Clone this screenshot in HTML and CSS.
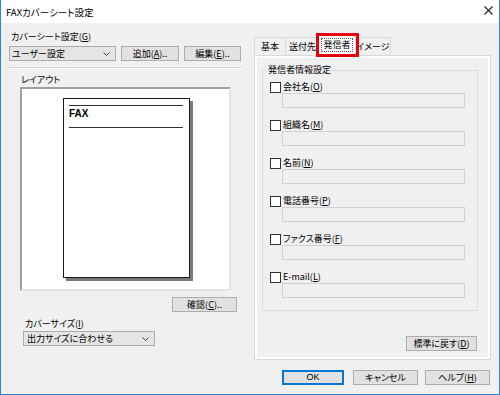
FILE: index.html
```html
<!DOCTYPE html>
<html lang="ja">
<head>
<meta charset="utf-8">
<title>FAXカバーシート設定</title>
<link rel="stylesheet" href="styles.css">
</head>
<body>
<div class="window">
  <div class="titlebar">
    <span class="title">FAXカバーシート設定</span>
    <svg class="close" width="9" height="9" viewBox="0 0 9 9"><path d="M0.5 0.5 L8.5 8.5 M8.5 0.5 L0.5 8.5" stroke="#222" stroke-width="1.1" fill="none"/></svg>
  </div>
  <div class="main">
    <div class="left">
      <div class="label lbl-cover">カバーシート設定(<u>G</u>)</div>
      <div class="row-top">
        <div class="combo combo-user"><span>ユーザー設定</span><svg class="chev" width="7" height="4" viewBox="0 0 7 4"><path d="M0.5 0.5 L3.5 3.5 L6.5 0.5" stroke="#444" fill="none"/></svg></div>
        <div class="btn btn-add">追加(<u>A</u>)..</div>
        <div class="btn btn-edit">編集(<u>E</u>)..</div>
      </div>
      <div class="sep"></div>
      <div class="label lbl-layout">レイアウト</div>
      <div class="preview">
        <div class="sheet">
          <div class="pline"></div>
          <div class="fax">FAX</div>
          <div class="pline"></div>
        </div>
      </div>
      <div class="btn btn-confirm">確認(<u>C</u>)..</div>
      <div class="label lbl-size">カバーサイズ(<u>I</u>)</div>
      <div class="combo combo-size"><span>出力サイズに合わせる</span><svg class="chev" width="7" height="4" viewBox="0 0 7 4"><path d="M0.5 0.5 L3.5 3.5 L6.5 0.5" stroke="#444" fill="none"/></svg></div>
    </div>
    <div class="right">
      <div class="tabs">
        <div class="tab t1">基本</div>
        <div class="tab t2">送付先</div>
        <div class="tab t3 sel"><span class="focus">発信者</span></div>
        <div class="tab t4">イメージ</div>
      </div>
      <div class="panel">
        <div class="panel-inner">
          <fieldset class="group">
            <legend>発信者情報設定</legend>
            <div class="field"><div class="chk"><span class="box"></span>会社名(<u>O</u>)</div><div class="edit"></div></div>
            <div class="field"><div class="chk"><span class="box"></span>組織名(<u>M</u>)</div><div class="edit"></div></div>
            <div class="field"><div class="chk"><span class="box"></span>名前(<u>N</u>)</div><div class="edit"></div></div>
            <div class="field"><div class="chk"><span class="box"></span>電話番号(<u>P</u>)</div><div class="edit"></div></div>
            <div class="field"><div class="chk"><span class="box"></span>ファクス番号(<u>F</u>)</div><div class="edit"></div></div>
            <div class="field last"><div class="chk"><span class="box"></span>E-mail(<u>L</u>)</div><div class="edit"></div></div>
          </fieldset>
          <div class="btn btn-reset">標準に戻す(<u>D</u>)</div>
        </div>
      </div>
    </div>
  </div>
  <div class="footer">
    <div class="btn btn-ok">OK</div>
    <div class="btn btn-cancel">キャンセル</div>
    <div class="btn btn-help">ヘルプ(<u>H</u>)</div>
  </div>
</div>
</body>
</html>
```

FILE: styles.css
```css
html, body {
  margin: 0;
  padding: 0;
}
body {
  width: 500px;
  height: 395px;
  font-family: "Noto Sans CJK JP", "Noto Sans", sans-serif;
  font-size: 9px;
  color: #000;
  font-feature-settings: "palt";
  overflow: hidden;
}
u {
  text-decoration: underline;
  text-underline-offset: 1px;
}
.window {
  box-sizing: border-box;
  width: 500px;
  height: 395px;
  border: 1px solid #2a86d8;
  border-top: none;
  background: #f0f0f0;
  display: flex;
  flex-direction: column;
}
.titlebar {
  height: 23px;
  background: #fff;
  display: flex;
  align-items: center;
  justify-content: space-between;
  padding: 0 6px 0 5px;
}
.title {
  font-size: 9.5px;
  line-height: 12px;
}
.close {
  display: block;
  margin-top: -2px;
}
.main {
  display: flex;
  padding: 7px 7px 0 7px;
  gap: 12px;
}
.left {
  width: 234px;
  display: flex;
  flex-direction: column;
}
.label {
  height: 14px;
  line-height: 14px;
}
.lbl-cover {
  margin-left: 3px;
}
.row-top {
  display: flex;
  margin-top: 2px;
  margin-left: 1px;
}
.combo {
  box-sizing: border-box;
  height: 15px;
  background: #e5e5e5;
  border: 1px solid #acacac;
  display: flex;
  align-items: center;
  justify-content: space-between;
  padding: 0 5px 0 2px;
  line-height: 13px;
}
.combo-user {
  width: 107px;
}
.btn {
  box-sizing: border-box;
  height: 15px;
  background: #e1e1e1;
  border: 1px solid #adadad;
  display: flex;
  align-items: center;
  justify-content: center;
  line-height: 13px;
  white-space: nowrap;
}
.btn-add {
  width: 58px;
  margin-left: 5px;
}
.btn-edit {
  width: 57px;
  margin-left: 5px;
}
.sep {
  margin-top: 6px;
  border-top: 1px solid #d5d5d5;
  border-bottom: 1px solid #ffffff;
  height: 0;
  width: 234px;
}
.lbl-layout {
  margin-top: 4px;
  margin-left: 13px;
}
.preview {
  box-sizing: border-box;
  width: 211px;
  height: 204px;
  margin-left: 12px;
  background: #fff;
  border-top: 2px solid #a0a0a0;
  border-left: 2px solid #a0a0a0;
  border-right: 2px solid #e3e3e3;
  border-bottom: 2px solid #e3e3e3;
  padding: 9px 0 0 41px;
}
.sheet {
  box-sizing: border-box;
  width: 127px;
  height: 180px;
  border: 1px solid #1a1a1a;
  box-shadow: 3px 3px 0 #7a7a7a;
  padding: 6px 6px 0 5px;
  background: #fff;
}
.pline {
  height: 1px;
  background: #333;
}
.fax {
  font-family: "Liberation Sans", Arial, sans-serif;
  font-weight: bold;
  font-size: 10px;
  line-height: 12px;
  height: 21px;
  padding-top: 2px;
  box-sizing: border-box;
}
.btn-confirm {
  width: 65px;
  margin-top: 6px;
  margin-left: 164px;
}
.lbl-size {
  margin-top: 5px;
  margin-left: 17px;
}
.combo-size {
  width: 132px;
  margin-left: 15px;
  padding-left: 3px;
}
.right {
  width: 237px;
  margin-top: 5px;
  display: flex;
  flex-direction: column;
}
.tabs {
  height: 20px;
  display: flex;
  align-items: flex-end;
}
.tab {
  box-sizing: border-box;
  height: 18px;
  border: 1px solid #d9d9d9;
  border-bottom: none;
  background: #f0f0f0;
  display: flex;
  align-items: center;
  justify-content: center;
  line-height: 14px;
  font-size: 9px;
  white-space: nowrap;
  padding: 0;
}
.t1 { width: 32px; }
.t2 { width: 35px; margin-left: -1px; }
.t3 { width: 38px; }
.t4 { width: 36px; }
.tab.sel {
  height: 20px;
  margin: 0 -1px 0 -2px;
  background: #fff;
  position: relative;
  z-index: 1;
  padding-bottom: 2px;
}
.focus {
  outline: 1px dotted #555;
  outline-offset: 0;
  padding: 0 1px;
  line-height: 12px;
}
.tab.sel::after {
  content: "";
  position: absolute;
  left: -3px;
  right: -4px;
  top: -3px;
  bottom: -2px;
  border: 3px solid #e6000f;
}
.panel {
  box-sizing: border-box;
  height: 305px;
  border: 1px solid #d9d9d9;
  background: #fff;
  padding: 2px;
}
.panel-inner {
  height: 100%;
  box-sizing: border-box;
  background: #f0f0f0;
  display: flex;
  flex-direction: column;
  align-items: flex-end;
}
.group {
  box-sizing: border-box;
  align-self: flex-start;
  width: 216px;
  margin: 6px 0 0 5px;
  padding: 5px 7px 12px 7px;
  border: 1px solid #dcdcdc;
  min-width: 0;
}
.group legend {
  padding: 0 1px;
  margin-left: -3px;
  line-height: 12px;
  font-size: 9px;
}
.field {
  margin-bottom: 11px;
}
.field.last {
  margin-bottom: 0;
}
.chk {
  height: 12px;
  display: flex;
  align-items: center;
  line-height: 12px;
}
.box {
  box-sizing: border-box;
  width: 11px;
  height: 11px;
  border: 1px solid #333;
  background: #fff;
  margin-right: 2px;
}
.edit {
  box-sizing: border-box;
  width: 183px;
  height: 15px;
  margin-left: 12px;
  border: 1px solid #d0d0d0;
  background: #f0f0f0;
}
.btn-reset {
  width: 71px;
  margin-top: 25px;
  margin-right: 11px;
}
.footer {
  display: flex;
  justify-content: flex-end;
  padding: 10px 9px 0 0;
}
.btn-ok {
  width: 62px;
  border: 1px solid #0078d7;
  box-shadow: inset 0 0 0 1px #0078d7;
  font-family: "Liberation Sans", Arial, sans-serif;
}
.btn-cancel {
  width: 65px;
  margin-left: 9px;
}
.btn-help {
  width: 65px;
  margin-left: 7px;
}
```
